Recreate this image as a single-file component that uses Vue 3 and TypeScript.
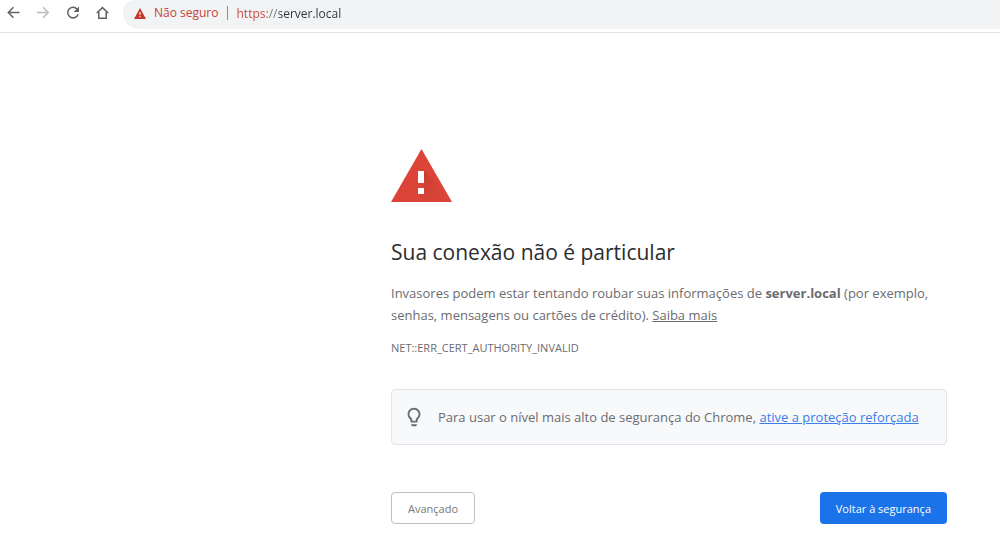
<script setup lang="ts">
import { ref } from 'vue'

const host = 'server.local'
const address = ref<string>(`https://${host}`)
const errorCode = 'NET::ERR_CERT_AUTHORITY_INVALID'
</script>

<template>
  <div class="browser">
    <header class="toolbar">
      <nav class="nav" aria-label="Navegação">
        <button type="button" aria-label="Voltar">
          <svg viewBox="0 0 16 16"><path d="M14.5 7.500H3.500M8.500 2.300 3.300 7.500l5.200 5.200" /></svg>
        </button>
        <button type="button" class="dim" aria-label="Avançar">
          <svg viewBox="0 0 16 16"><path d="M2 7.500h11M8 2.300l5.200 5.200L8 12.700" /></svg>
        </button>
        <button type="button" aria-label="Recarregar">
          <svg viewBox="0 0 16 16">
            <path d="M12 4A5.300 5.300 0 1 0 13.100 9.200" />
            <path class="solid" d="M14 1.600v5.400H8.600z" />
          </svg>
        </button>
        <button type="button" aria-label="Página inicial">
          <svg viewBox="0 0 16 16"><path d="M1.800 8 7.500 2.600 13.200 8M3.800 7v6.300h7.400V7" /></svg>
        </button>
      </nav>
      <div class="omnibox">
        <button type="button" class="status">
          <svg viewBox="0 0 12 11">
            <path fill="#c5372c" d="M6 0 12 11H0z" />
            <path fill="#f1f3f4" d="M5.400 4h1.200v3H5.400zM5.400 8h1.200v1.200H5.400z" />
          </svg>
          <span>Não seguro</span>
        </button>
        <input v-model="address" class="address" type="text" aria-label="Endereço" spellcheck="false" />
      </div>
    </header>

    <main class="warning">
      <svg class="alert" viewBox="0 0 61 53" aria-hidden="true">
        <defs>
          <linearGradient id="shade" x1="0" y1="0" x2="1" y2="1">
            <stop offset="0" stop-color="#b93a2e" stop-opacity="0.9" />
            <stop offset="1" stop-color="#db4437" stop-opacity="0" />
          </linearGradient>
        </defs>
        <path fill="#db4437" d="M30.500 0 61 53H0z" />
        <path fill="url(#shade)" d="M33 22 45 34 56 53H36L27 45V39h6z" />
        <path fill="#fff" d="M27 22h6v12h-6zM27 39h6v6h-6z" />
      </svg>
      <h1>Sua conexão não é particular</h1>
      <p class="lead">
        Invasores podem estar tentando roubar suas informações de <strong>{{ host }}</strong> (por exemplo,
        senhas, mensagens ou cartões de crédito). <a href="#saiba-mais">Saiba mais</a>
      </p>
      <p class="code">{{ errorCode }}</p>
      <aside class="tip">
        <svg viewBox="0 0 24 24" aria-hidden="true">
          <path d="M9 21c0 .55.45 1 1 1h4c.55 0 1-.45 1-1v-1H9v1zm3-19C8.140 2 5 5.140 5 9c0 2.380 1.190 4.470 3 5.740V17c0 .55.45 1 1 1h6c.55 0 1-.45 1-1v-2.260c1.810-1.270 3-3.360 3-5.740 0-3.860-3.140-7-7-7zm2.850 11.100-.85.6V16h-4v-2.300l-.85-.6A4.997 4.997 0 0 1 7 9c0-2.760 2.240-5 5-5s5 2.240 5 5c0 1.630-.8 3.160-2.150 4.100z" />
        </svg>
        <p>Para usar o nível mais alto de segurança do Chrome, <a href="#protecao">ative a proteção reforçada</a></p>
      </aside>
      <div class="actions">
        <button type="button" class="secondary">Avançado</button>
        <button type="button" class="primary">Voltar à segurança</button>
      </div>
    </main>
  </div>
</template>

<style>
body {
  background: #fff;
}
</style>

<style scoped>
.browser {
  font-family: "Open Sans", "Noto Sans", sans-serif;
  color: #6b6c6f;
}
button {
  font: inherit;
  border: 0;
  background: none;
  padding: 0;
  cursor: pointer;
}
.toolbar {
  display: flex;
  align-items: flex-start;
  gap: 12px;
  padding-left: 5px;
  height: 32px;
  border-bottom: 1px solid #e2e3e5;
}
.nav {
  display: flex;
  gap: 14px;
  padding-top: 5px;
}
.nav button {
  width: 16px;
  height: 16px;
}
.nav svg {
  display: block;
  fill: none;
  stroke: #5f6368;
  stroke-width: 1.5;
}
.nav .dim svg {
  stroke: #babcbe;
}
.nav .solid {
  fill: #5f6368;
  stroke: none;
}
.omnibox {
  flex: 1;
  display: flex;
  align-items: center;
  height: 29px;
  padding-left: 11px;
  background: #f1f3f4;
  border-radius: 12px 0 0 16px;
  font-size: 12px;
}
.status {
  display: flex;
  align-items: center;
  gap: 8px;
  line-height: 26px;
  padding-bottom: 3px;
  color: #c5443b;
}
.status svg {
  width: 12px;
  height: 11px;
}
.status::after {
  content: "";
  width: 1px;
  height: 14px;
  background: #8b8e92;
}
.address {
  flex: 1;
  min-width: 0;
  height: 26px;
  margin: 0 0 3px 9px;
  padding: 0;
  border: 0;
  outline: 0;
  font: inherit;
  color: transparent;
  caret-color: #303236;
  background: linear-gradient(to right, #c5443b 31px, #777a7e 31px 42px, #303236 42px);
  background-clip: text;
  -webkit-background-clip: text;
}
.warning {
  margin: 116px 53px 0 391px;
}
.alert {
  display: block;
  width: 61px;
  height: 53px;
}
h1 {
  margin: 34px 0 0;
  font-size: 21px;
  font-weight: 400;
  line-height: 32px;
  color: #2b2c30;
}
.lead {
  margin: 14px 0 0;
  font-size: 13px;
  line-height: 22px;
}
.lead a {
  color: inherit;
}
.code {
  margin: 14px 0 0;
  font-size: 11px;
  line-height: 16px;
}
.tip {
  display: flex;
  align-items: center;
  gap: 13px;
  margin-top: 33px;
  padding: 16px 11px;
  border: 1px solid #e2e4ea;
  border-radius: 4px;
  background: #f8f9fb;
}
.tip svg {
  flex: none;
  width: 22px;
  height: 22px;
  fill: #6b6c6f;
}
.tip p {
  margin: 0;
  font-size: 13px;
  line-height: 22px;
}
.tip a {
  color: #3b7de9;
}
.actions {
  display: flex;
  justify-content: space-between;
  align-items: flex-start;
  margin-top: 47px;
  font-size: 11px;
}
.actions button {
  height: 32px;
  padding: 0 16px;
  border-radius: 4px;
}
.actions .secondary {
  border: 1px solid #bfc1c5;
  color: #77787b;
}
.actions .primary {
  background: #1a73e8;
  color: #fff;
}
</style>
